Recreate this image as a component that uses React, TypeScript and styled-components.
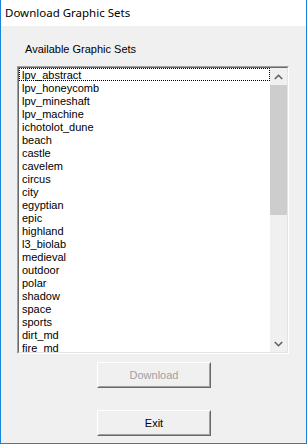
import React from "react";
import styled, { createGlobalStyle } from "styled-components";

const Global = createGlobalStyle`
  html, body { margin: 0; padding: 0; background: #ffffff; }
  #root { width: 307px; height: 444px; }
`;

const Window = styled.div`
  width: 307px;
  height: 444px;
  box-sizing: border-box;
  border: 1px solid #1883d7;
  border-top: none;
  display: flex;
  flex-direction: column;
  background: #f0f0f0;
  overflow: hidden;
`;

const TitleBar = styled.div`
  height: 26px;
  flex: 0 0 26px;
  background: #ffffff;
  display: flex;
  align-items: center;
  padding-left: 4px;
  padding-bottom: 1px;
  box-sizing: border-box;
  font-family: "Noto Sans", "Segoe UI", sans-serif;
  font-size: 11.5px;
  color: #000000;
`;

const Body = styled.div`
  flex: 1;
  display: flex;
  flex-direction: column;
  font-family: "Liberation Sans", Arial, sans-serif;
  font-size: 11px;
  color: #000;
`;

const Label = styled.div`
  margin: 17px 0 0 24px;
  height: 13px;
  line-height: 13px;
`;

const ListBox = styled.div`
  margin: 10px 0 0 16px;
  width: 272px;
  height: 288px;
  box-sizing: border-box;
  border-style: solid;
  border-width: 1px;
  border-color: #a0a0a0 #ffffff #ffffff #a0a0a0;
  display: flex;
`;

const ListInner = styled.div`
  flex: 1;
  display: flex;
  border-style: solid;
  border-width: 1px;
  border-color: #696969 #e3e3e3 #e3e3e3 #696969;
  background: #ffffff;
  overflow: hidden;
`;

const Items = styled.div`
  flex: 1;
  display: flex;
  flex-direction: column;
  overflow: hidden;
`;

const Item = styled.div<{ $focused?: boolean }>`
  flex: 0 0 13px;
  height: 13px;
  line-height: 13px;
  padding-left: 3px;
  box-sizing: border-box;
  white-space: nowrap;
  outline: ${(p) => (p.$focused ? "1px dotted #000" : "none")};
  outline-offset: -1px;
  padding-top: 0.5px;
`;

const ScrollBar = styled.div`
  flex: 0 0 17px;
  width: 17px;
  background: #f0f0f0;
  display: flex;
  flex-direction: column;
`;

const ArrowButton = styled.div`
  flex: 0 0 17px;
  height: 17px;
  display: flex;
  align-items: center;
  justify-content: center;
`;

const Thumb = styled.div`
  flex: 0 0 130px;
  background: #cdcdcd;
`;

const Track = styled.div`
  flex: 1;
`;

const ButtonRow = styled.div<{ $top: number }>`
  margin-top: ${(p) => p.$top}px;
  padding-left: 96px;
  display: flex;
`;

const Button = styled.div`
  width: 114px;
  height: 26px;
  box-sizing: border-box;
  border-style: solid;
  border-width: 1px;
  border-color: #ffffff #696969 #696969 #ffffff;
  display: flex;
`;

const ButtonFace = styled.div<{ $disabled?: boolean }>`
  flex: 1;
  border-style: solid;
  border-width: 1px;
  border-color: #f0f0f0 #a0a0a0 #a0a0a0 #f0f0f0;
  background: #f0f0f0;
  display: flex;
  align-items: center;
  justify-content: center;
  color: ${(p) => (p.$disabled ? "#a0a0a0" : "#000000")};
  font-size: 11px;
  padding-bottom: 1px;
`;

const items = [
  "lpv_abstract",
  "lpv_honeycomb",
  "lpv_mineshaft",
  "lpv_machine",
  "ichotolot_dune",
  "beach",
  "castle",
  "cavelem",
  "circus",
  "city",
  "egyptian",
  "epic",
  "highland",
  "l3_biolab",
  "medieval",
  "outdoor",
  "polar",
  "shadow",
  "space",
  "sports",
  "dirt_md",
  "fire_md",
];

const Chevron = ({ up }: { up?: boolean }) => (
  <svg width="9" height="6" viewBox="0 0 9 6">
    <path
      d={up ? "M0.8 5 L4.5 1.3 L8.2 5" : "M0.8 1 L4.5 4.7 L8.2 1"}
      fill="none"
      stroke="#606060"
      strokeWidth="1.6"
    />
  </svg>
);

export default function App() {
  return (
    <>
      <Global />
      <Window>
        <TitleBar>Download Graphic Sets</TitleBar>
        <Body>
          <Label>Available Graphic Sets</Label>
          <ListBox>
            <ListInner>
              <Items>
                {items.map((it, i) => (
                  <Item key={it} $focused={i === 0}>
                    {it}
                  </Item>
                ))}
              </Items>
              <ScrollBar>
                <ArrowButton>
                  <Chevron up />
                </ArrowButton>
                <Thumb />
                <Track />
                <ArrowButton>
                  <Chevron />
                </ArrowButton>
              </ScrollBar>
            </ListInner>
          </ListBox>
          <ButtonRow $top={8}>
            <Button>
              <ButtonFace $disabled>Download</ButtonFace>
            </Button>
          </ButtonRow>
          <ButtonRow $top={22}>
            <Button>
              <ButtonFace>Exit</ButtonFace>
            </Button>
          </ButtonRow>
        </Body>
      </Window>
    </>
  );
}
